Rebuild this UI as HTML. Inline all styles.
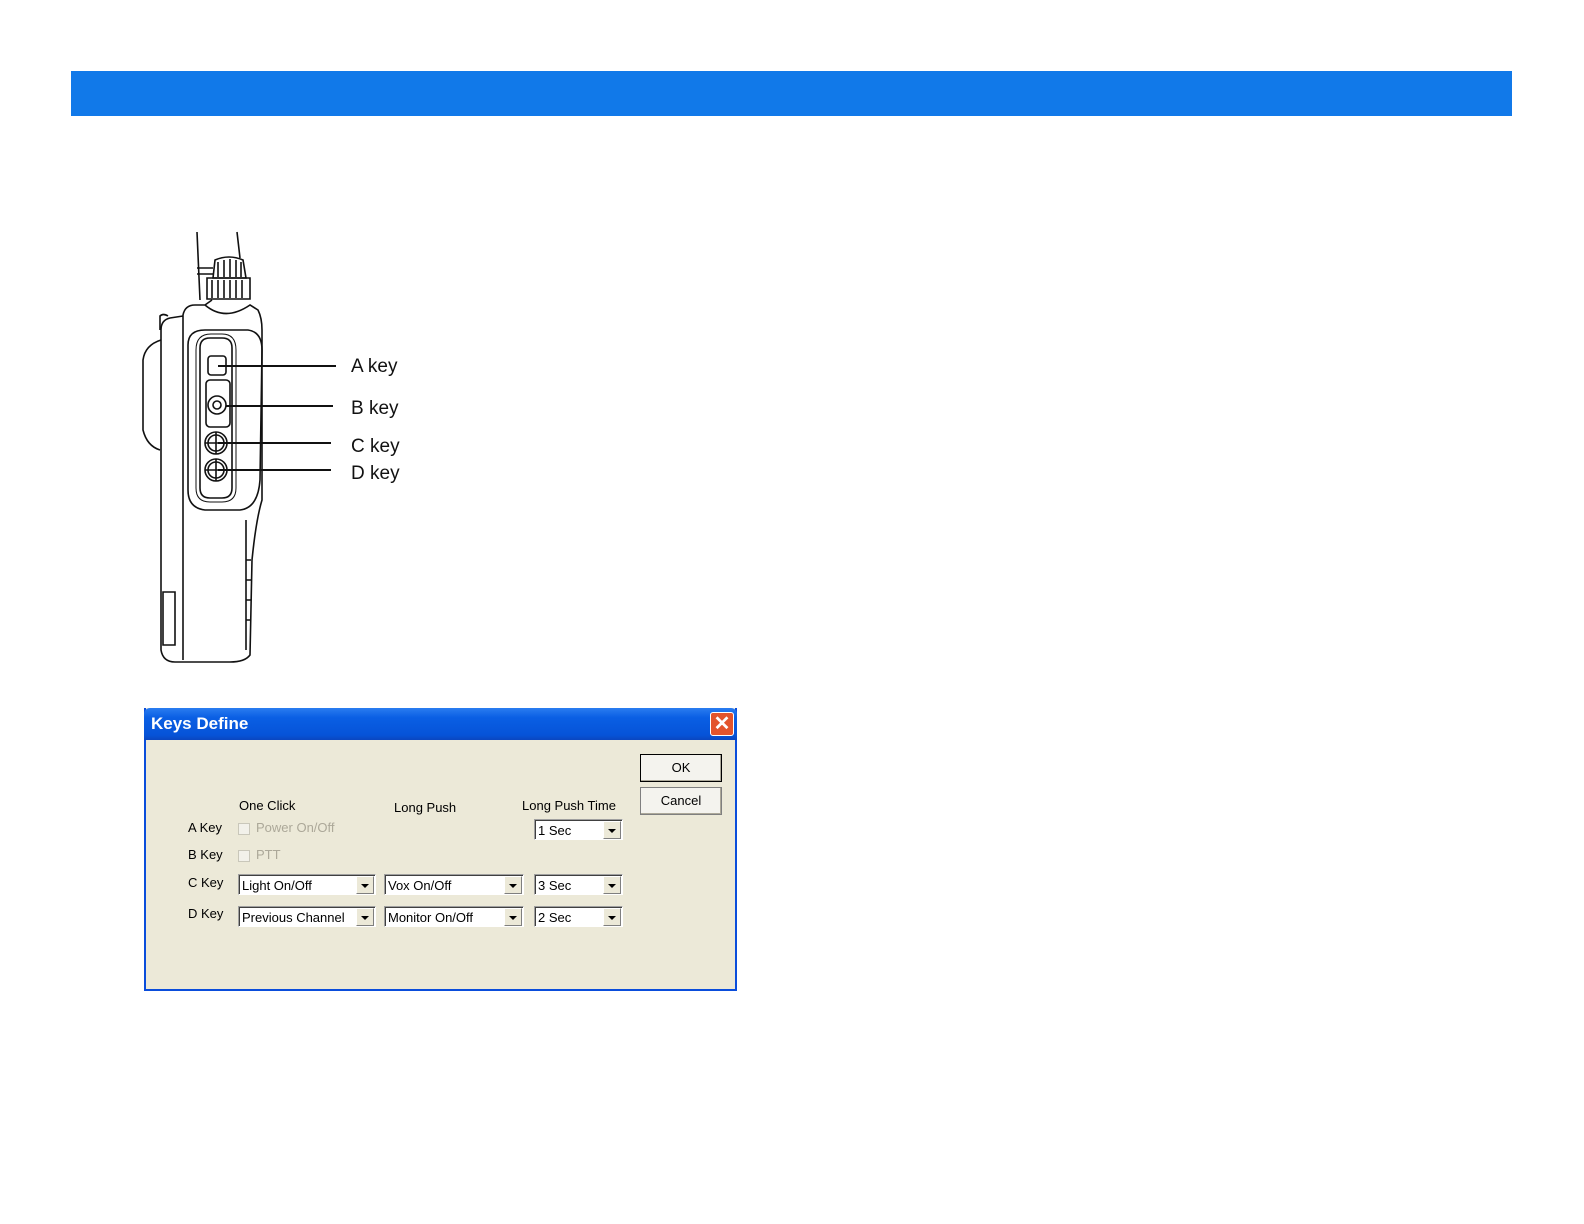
<!DOCTYPE html>
<html><head><meta charset="utf-8"><style>
*{margin:0;padding:0;box-sizing:border-box}
body{width:1584px;height:1224px;background:#fff;position:relative;overflow:hidden;font-family:"Liberation Sans",sans-serif}
.bar{position:absolute;left:71px;top:71px;width:1441px;height:45px;background:#1179e9}
.lbl{position:absolute;left:351px;font-size:19px;color:#111;line-height:1}
.dlg{position:absolute;left:144px;top:708px;width:593px;height:283px;background:#ece9d8;border:2px solid #0a4ddb;border-top:none}
.title{position:absolute;left:-2px;top:0;width:593px;height:32px;background:linear-gradient(#2a7cf0,#0a5fe4 30%,#0653d8 85%,#0a46c0);border-radius:6px 6px 0 0}
.title span{position:absolute;left:7px;top:6px;color:#fff;font-weight:bold;font-size:17px}
.close{position:absolute;left:566px;top:4px;width:24px;height:24px;background:#e3542d;border:1px solid #fff;border-radius:3px;color:#fff;font-size:20px;font-weight:bold;text-align:center;line-height:22px}
.t{position:absolute;font-size:13px;color:#000;white-space:nowrap}
.g{color:#aca899}
.btn{position:absolute;width:82px;height:28px;background:#f4f3ee;border:1px solid #7f7f7f;box-shadow:inset -1px -1px #aca899;font-size:13px;text-align:center;line-height:26px}
.cb{position:absolute;width:12px;height:12px;border:1px solid #c9c7ba;background:#f2f1ea}
.combo{position:absolute;height:21px;background:#fff;border:1px solid #7f9db9;border-color:#a0a0a0 #fff #fff #a0a0a0;box-shadow:inset 1px 1px #404040}
.combo span{position:absolute;left:3px;top:3px;font-size:13px}
.combo i{position:absolute;right:1px;top:1px;width:18px;height:18px;background:#ece9d8;border:1px solid #fff;border-right-color:#7f7f7f;border-bottom-color:#7f7f7f}
.combo i:after{content:"";position:absolute;left:4px;top:7px;border-left:4px solid transparent;border-right:4px solid transparent;border-top:4px solid #000}
</style></head><body>
<div class="bar"></div>

<svg style="position:absolute;left:0;top:0" width="420" height="680" fill="none" stroke="#111" stroke-width="1.6">
<path d="M197 232 L200 300 M237 232 L240 258"/>
<path d="M213 278 L215 260 Q229 254 243 260 L246 278 Z"/>
<path d="M218 262 V277 M224 260 V277 M230 259 V277 M236 260 V277 M241 262 V277"/>
<path d="M207 278 H250 V299 H207 Z"/>
<path d="M212 280 V298 M218 280 V298 M224 280 V298 M230 280 V298 M236 280 V298 M242 280 V298"/>
<path d="M197 268 H213 M197 274 H213"/>
<path d="M183 660 V315 Q185 305 195 305 H205 L212 300 M205 305 Q225 322 250 305 L258 310 Q262 318 262 330 V500 Q256 520 252 560 L250 655 Q245 662 230 662 H175 Q163 662 161 650 V330 Q161 320 170 318 L183 316"/>
<path d="M161 340 Q145 345 143 360 V430 Q147 446 160 450"/>
<path d="M160 330 V316 Q163 313 168 316"/>
<path d="M163 592 H175 V645 H163 Z"/>
<path d="M246 520 V650 M246 560 H251 M246 580 H251 M246 600 H251 M246 620 H251"/>
<path d="M188 345 Q188 330 205 330 H248 Q262 332 262 350 L260 480 Q258 508 240 510 H205 Q188 508 188 490 Z"/>
<path d="M200 348 Q200 338 210 338 H222 Q232 338 232 348 V488 Q232 498 222 498 H210 Q200 498 200 488 Z"/>
<path d="M196 350 Q196 334 211 334 H222 Q236 334 236 350 V488 Q236 502 222 502 H210 Q196 502 196 488 Z" stroke-width="1"/>
<rect x="208" y="356" width="18" height="19" rx="3"/>
<rect x="206" y="380" width="24" height="47" rx="4"/>
<circle cx="217" cy="405" r="9"/><circle cx="217" cy="405" r="4"/>
<circle cx="216" cy="443" r="11"/><circle cx="216" cy="443" r="8"/>
<circle cx="216" cy="470" r="11"/><circle cx="216" cy="470" r="8"/>
<path d="M205 443 H227 M216 432 V454 M205 470 H227 M216 459 V481"/>
<path d="M218 366 H336 M226 406 H333 M218 443 H331 M218 470 H331" stroke-width="2"/>
</svg>
<div class="lbl" style="top:357px">A key</div>
<div class="lbl" style="top:399px">B key</div>
<div class="lbl" style="top:437px">C key</div>
<div class="lbl" style="top:464px">D key</div>

<div class="dlg">
 <div class="title"><span>Keys Define</span><div class="close">✕</div></div>
 <div class="btn" style="left:494px;top:46px;border:1px solid #000">OK</div>
 <div class="btn" style="left:494px;top:79px">Cancel</div>
 <div class="t" style="left:93px;top:90px">One Click</div>
 <div class="t" style="left:248px;top:92px">Long Push</div>
 <div class="t" style="left:376px;top:90px">Long Push Time</div>
 <div class="t" style="left:42px;top:112px">A Key</div>
 <div class="t" style="left:42px;top:139px">B Key</div>
 <div class="t" style="left:42px;top:167px">C Key</div>
 <div class="t" style="left:42px;top:198px">D Key</div>
 <div class="cb" style="left:92px;top:115px"></div><div class="t g" style="left:110px;top:112px">Power On/Off</div>
 <div class="cb" style="left:92px;top:142px"></div><div class="t g" style="left:110px;top:139px">PTT</div>
 <div class="combo" style="left:388px;top:111px;width:89px"><span>1 Sec</span><i></i></div>
 <div class="combo" style="left:92px;top:166px;width:138px"><span>Light On/Off</span><i></i></div>
 <div class="combo" style="left:238px;top:166px;width:140px"><span>Vox On/Off</span><i></i></div>
 <div class="combo" style="left:388px;top:166px;width:89px"><span>3 Sec</span><i></i></div>
 <div class="combo" style="left:92px;top:198px;width:138px"><span>Previous Channel</span><i></i></div>
 <div class="combo" style="left:238px;top:198px;width:140px"><span>Monitor On/Off</span><i></i></div>
 <div class="combo" style="left:388px;top:198px;width:89px"><span>2 Sec</span><i></i></div>
</div>
</body></html>
